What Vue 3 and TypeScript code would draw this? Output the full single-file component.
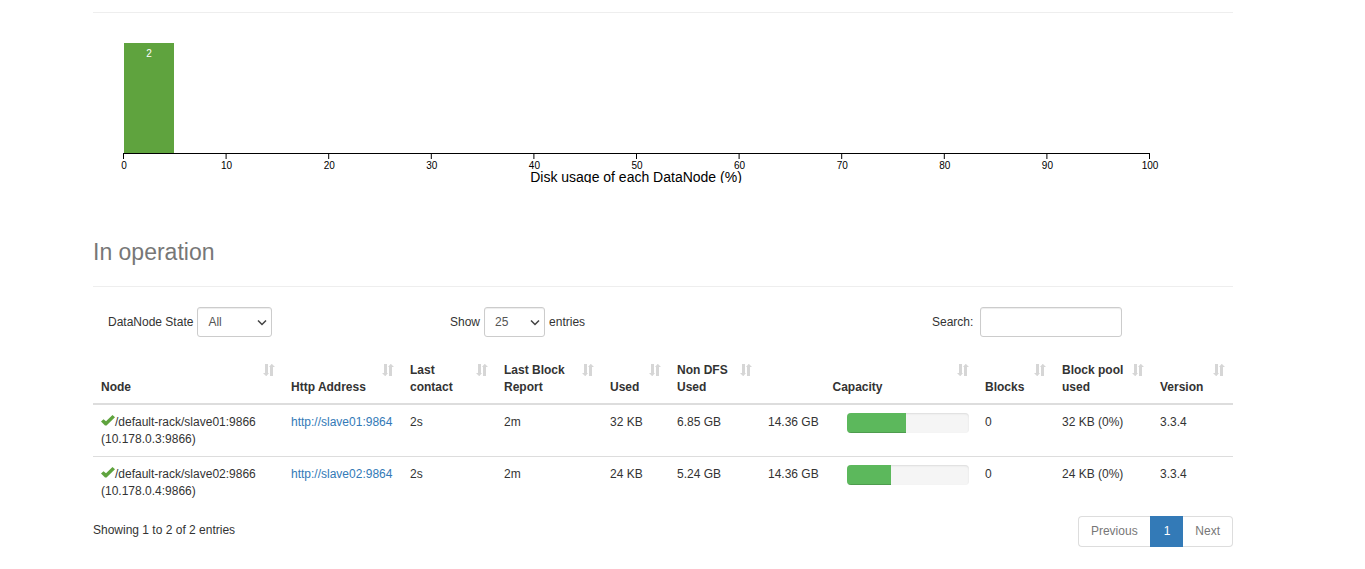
<script setup lang="ts">
import { ref } from 'vue'

interface DataNode {
  name: string
  address: string
  http: string
  contact: string
  report: string
  used: string
  nonDfs: string
  capacity: string
  percent: number
  blocks: number
  pool: string
  version: string
}

const nodes: DataNode[] = [
  {
    name: '/default-rack/slave01:9866', address: '(10.178.0.3:9866)', http: 'http://slave01:9864',
    contact: '2s', report: '2m', used: '32 KB', nonDfs: '6.85 GB', capacity: '14.36 GB',
    percent: 48, blocks: 0, pool: '32 KB (0%)', version: '3.3.4',
  },
  {
    name: '/default-rack/slave02:9866', address: '(10.178.0.4:9866)', http: 'http://slave02:9864',
    contact: '2s', report: '2m', used: '24 KB', nonDfs: '5.24 GB', capacity: '14.36 GB',
    percent: 36, blocks: 0, pool: '24 KB (0%)', version: '3.3.4',
  },
]

const headers = [
  { label: 'Node', span: 1 },
  { label: 'Http Address', span: 1 },
  { label: 'Last contact', span: 1 },
  { label: 'Last Block Report', span: 1 },
  { label: 'Used', span: 1 },
  { label: 'Non DFS Used', span: 1 },
  { label: 'Capacity', span: 2 },
  { label: 'Blocks', span: 1 },
  { label: 'Block pool used', span: 1 },
  { label: 'Version', span: 1 },
]

const columns = ['node', 'http', 'contact', 'report', 'used', 'nondfs', 'size', 'bar', 'blocks', 'pool', 'version']

const axisStart = 30
const axisWidth = 1026
const ticks = Array.from({ length: 11 }, (_, i) => ({
  value: i * 10,
  x: axisStart + (axisWidth * i) / 10,
}))

const state = ref('All')
const pageSize = ref('25')
const search = ref('')
</script>

<template>
  <main class="page">
    <div class="content">
      <hr class="rule" />
      <svg class="chart" viewBox="0 0 1140 150" role="img" aria-label="Disk usage histogram">
        <rect x="31" y="10" width="50" height="110" fill="#5fa33e" />
        <text class="count" x="56" y="24">2</text>
        <path d="M30.5 126V120.5H1056.5V126" fill="none" stroke="#000" />
        <g v-for="tick in ticks" :key="tick.value">
          <line :x1="tick.x + 0.5" :x2="tick.x + 0.5" y1="120" y2="126" stroke="#000" />
          <text class="tick" :x="tick.x + 1" y="136">{{ tick.value }}</text>
        </g>
        <text class="title" x="543" y="149">Disk usage of each DataNode (%)</text>
      </svg>

      <h3 class="heading">In operation</h3>

      <div class="controls">
        <div class="control">
          <label for="state">DataNode State</label>
          <span class="select state">
            <select id="state" v-model="state">
              <option>All</option>
              <option>In service</option>
            </select>
            <svg viewBox="0 0 10 6"><path d="M1 0.5L5 4.5L9 0.5" /></svg>
          </span>
        </div>
        <div class="control">
          <label for="size">Show</label>
          <span class="select size">
            <select id="size" v-model="pageSize">
              <option>25</option>
              <option>50</option>
              <option>100</option>
            </select>
            <svg viewBox="0 0 10 6"><path d="M1 0.5L5 4.5L9 0.5" /></svg>
          </span>
          <span>entries</span>
        </div>
        <div class="control search">
          <label for="search">Search:</label>
          <input id="search" v-model="search" type="search" />
        </div>
      </div>

      <table class="nodes">
        <colgroup>
          <col v-for="c in columns" :key="c" :class="'col-' + c" />
        </colgroup>
        <thead>
          <tr>
            <th v-for="h in headers" :key="h.label" :colspan="h.span" :class="{ center: h.span > 1 }" scope="col">
              {{ h.label }}
              <svg class="sort" viewBox="0 0 12 12">
                <path d="M2 0H5V9H6L3.5 12H3L0 9H2ZM7 12V3H6L8.5 0H9L12 3H10V12Z" />
              </svg>
            </th>
          </tr>
        </thead>
        <tbody>
          <tr v-for="n in nodes" :key="n.name">
            <td>
              <svg class="check" viewBox="0 0 14 11"><path d="M0 6.5L2.5 4.2L5 6.2L11.5 0L14 2.2L5.5 10.5H4Z" /></svg>{{ n.name }}<br />{{ n.address }}
            </td>
            <td><a href="#">{{ n.http }}</a></td>
            <td>{{ n.contact }}</td>
            <td>{{ n.report }}</td>
            <td>{{ n.used }}</td>
            <td>{{ n.nonDfs }}</td>
            <td>{{ n.capacity }}</td>
            <td class="usage">
              <div class="progress"><div class="fill" :style="{ width: n.percent + '%' }"></div></div>
            </td>
            <td>{{ n.blocks }}</td>
            <td>{{ n.pool }}</td>
            <td>{{ n.version }}</td>
          </tr>
        </tbody>
      </table>

      <div class="footer">
        <span>Showing 1 to 2 of 2 entries</span>
        <nav class="pages" aria-label="Pages">
          <a href="#">Previous</a>
          <a href="#" class="active">1</a>
          <a href="#">Next</a>
        </nav>
      </div>
    </div>
  </main>
</template>

<style>
body {
  margin: 0;
  background: #fff;
}
</style>

<style scoped>
* {
  box-sizing: border-box;
}

.page {
  padding: 12px 54px 20px 15px;
  font-family: "Liberation Sans", Arial, sans-serif;
  font-size: 12px;
  line-height: 17px;
  color: #333;
}

.content {
  max-width: 1140px;
  margin: 0 auto;
}

.rule {
  margin: 0 0 20px;
  border: 0;
  border-top: 1px solid #eee;
}

.chart {
  display: block;
  width: 100%;
  overflow: hidden;
}

.chart text {
  text-anchor: middle;
}

.count {
  font-size: 10px;
  fill: #fff;
}

.tick {
  font-size: 10px;
}

.title {
  font-size: 14px;
}

.heading {
  margin: 56px 0 20px;
  padding-bottom: 21px;
  border-bottom: 1px solid #eee;
  font-size: 23px;
  font-weight: 400;
  line-height: 26px;
  color: #777;
}

.controls {
  display: grid;
  grid-template-columns: 342fr 482fr 316fr;
}

.control {
  display: flex;
  align-items: center;
  gap: 4px;
  padding-left: 15px;
}

.search {
  gap: 7px;
}

.select {
  position: relative;
  display: block;
}

.state {
  width: 75px;
}

.size {
  width: 61px;
}

.select svg {
  position: absolute;
  right: 5px;
  top: 13px;
  width: 10px;
  height: 6px;
  fill: none;
  stroke: #444;
  stroke-width: 1.5;
  pointer-events: none;
}

select,
input {
  display: block;
  height: 30px;
  margin: 0;
  padding: 5px 10px;
  border: 1px solid #ccc;
  border-radius: 3px;
  background: #fff;
  box-shadow: inset 0 1px 1px rgba(0, 0, 0, 0.075);
  font: inherit;
  color: #555;
  appearance: none;
}

select {
  width: 100%;
}

input {
  width: 142px;
}

.nodes {
  width: 100%;
  margin-top: 16px;
  border-collapse: collapse;
  table-layout: fixed;
}

.col-node { width: 190px; }
.col-http { width: 119px; }
.col-contact { width: 94px; }
.col-report { width: 106px; }
.col-used { width: 67px; }
.col-nondfs { width: 91px; }
.col-size { width: 79px; }
.col-bar { width: 138px; }
.col-blocks { width: 77px; }
.col-pool { width: 98px; }
.col-version { width: 81px; }

th {
  position: relative;
  padding: 9px 26px 7px 8px;
  border-bottom: 2px solid #ddd;
  text-align: left;
  vertical-align: bottom;
}

th.center {
  padding-right: 30px;
  text-align: center;
}

.sort {
  position: absolute;
  top: 11px;
  right: 8px;
  width: 12px;
  height: 12px;
  fill: #d6d6d6;
}

td {
  padding: 9px 8px 8px;
  vertical-align: top;
}

.usage {
  padding-top: 8px;
}

tbody tr + tr td {
  border-top: 1px solid #ddd;
}

td:first-child {
  white-space: nowrap;
}

a {
  color: #337ab7;
  text-decoration: none;
}

.check {
  width: 14px;
  height: 11px;
  fill: #5fa33e;
}

.progress {
  height: 20px;
  overflow: hidden;
  border-radius: 4px;
  background: #f5f5f5;
  box-shadow: inset 0 1px 2px rgba(0, 0, 0, 0.1);
}

.fill {
  height: 100%;
  background: #5cb85c;
  box-shadow: inset 0 -1px 0 rgba(0, 0, 0, 0.15);
}

.footer {
  display: flex;
  justify-content: space-between;
  margin-top: 8px;
  line-height: 29px;
}

.pages {
  display: flex;
}

.pages a {
  padding: 0 12px;
  border: 1px solid #ddd;
  border-right: 0;
  color: #777;
}

.pages a:first-child {
  border-radius: 4px 0 0 4px;
}

.pages a:last-child {
  border-right: 1px solid #ddd;
  border-left: 0;
  border-radius: 0 4px 4px 0;
}

.pages .active {
  padding: 0 13px;
  border-color: #337ab7;
  background: #337ab7;
  color: #fff;
}
</style>
